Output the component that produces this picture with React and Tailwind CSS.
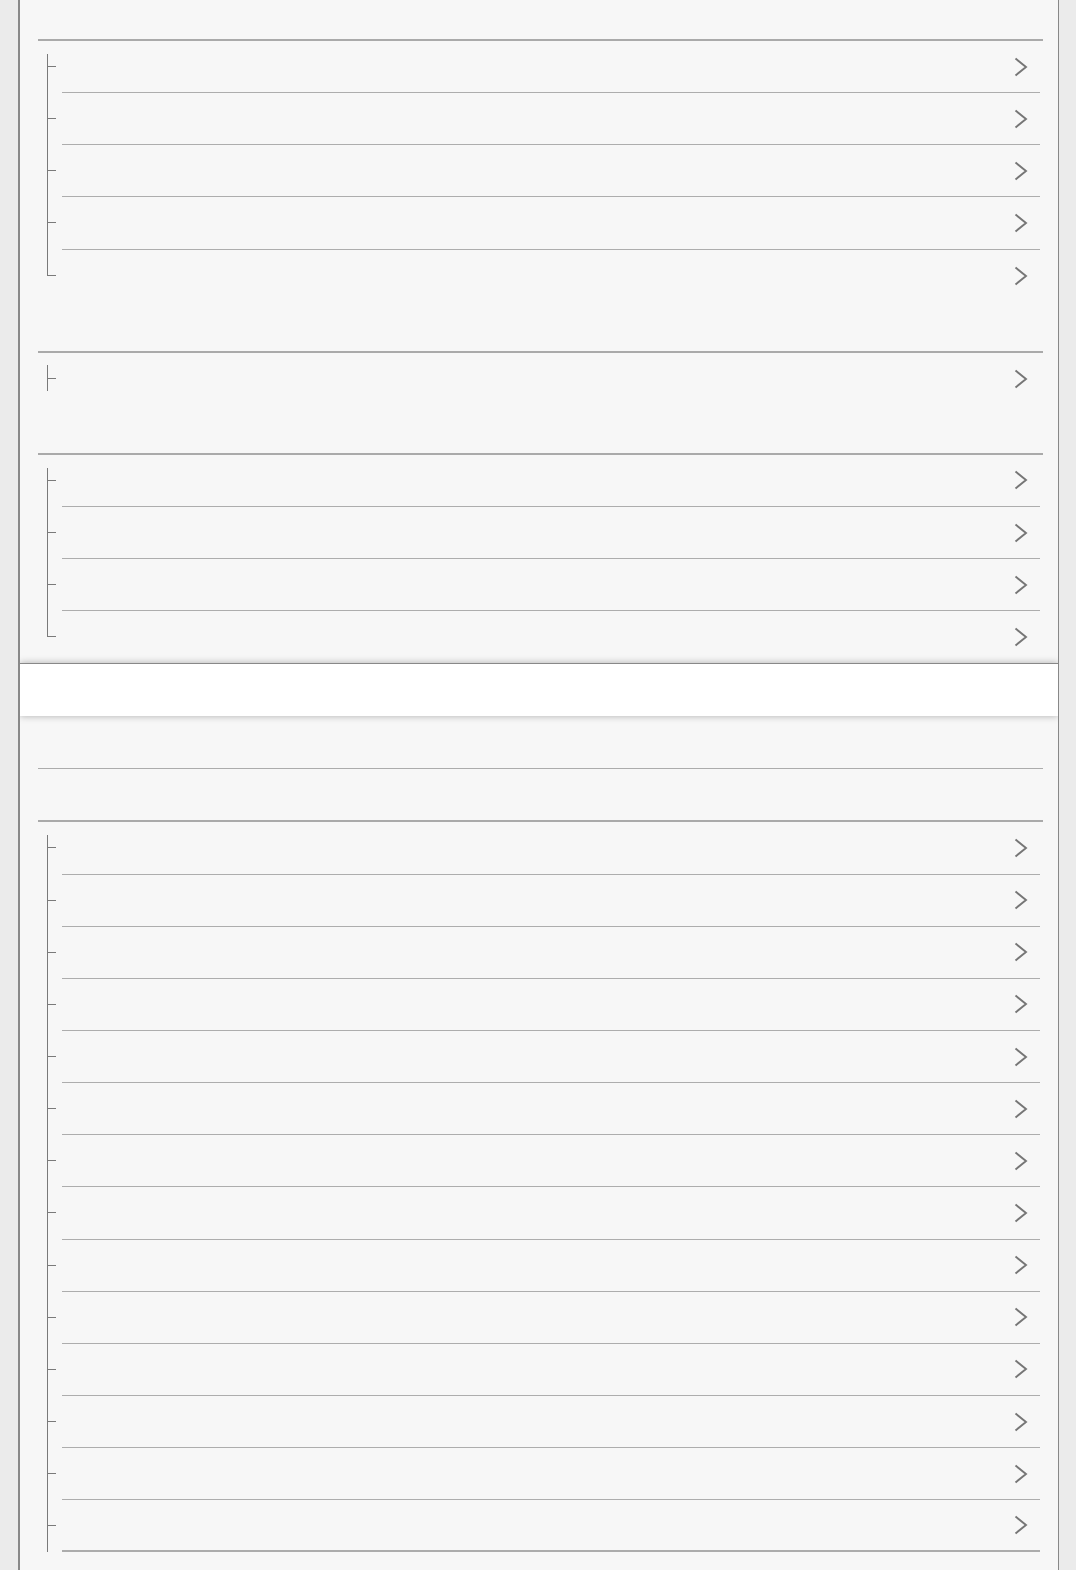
// Settings list – grouped rows with tree guides and chevrons
const Chevron = () => (
    <svg width="14" height="20" viewBox="0 0 14 20" fill="none" className="shrink-0">
        <polyline points="1.5,1.5 12,10 1.5,18.5" stroke="#767676" strokeWidth="1.9" strokeLinejoin="miter" />
    </svg>
);

// Tree guide for a row: kind = first | mid | last | single
function TreeGuide({ kind }) {
    return (
        <div className="ml-[9px] w-[15px] flex flex-col shrink-0">
            {kind === "first" && (
                <>
                    <div className="h-[13px]" />
                    <div className="h-[12px] border-l border-[#7a7a7a]" />
                </>
            )}
            {(kind === "mid" || kind === "last") && <div className="h-[25px] border-l border-[#7a7a7a]" />}
            {kind === "single" && (
                <>
                    <div className="h-[12px]" />
                    <div className="h-[13px] border-l border-[#7a7a7a]" />
                </>
            )}
            <div className="h-px w-[9px] bg-[#7a7a7a]" />
            {(kind === "first" || kind === "mid") && <div className="flex-1 border-l border-[#7a7a7a]" />}
            {kind === "single" && <div className="h-[12px] border-l border-[#7a7a7a]" />}
        </div>
    );
}

function Row({ kind, divider = true, heavy = false }) {
    return (
        <div className="h-[52.15px] flex">
            <TreeGuide kind={kind} />
            <div
                className={`flex-1 mr-[3px] flex items-center justify-end pr-[12px] ${
                    divider ? (heavy ? "border-b-2 border-[#acacac]" : "border-b border-[#adadad]") : ""
                }`}
            >
                <Chevron />
            </div>
        </div>
    );
}

function Section({ count, single = false, pad = "", lastDivider = false }) {
    const rows = Array.from({ length: count }, (_, i) => {
        if (single) return "single";
        if (i === 0) return "first";
        if (i === count - 1 && !lastDivider) return "last";
        return "mid";
    });
    return (
        <section className={`border-t-2 border-[#aaaaaa] ${pad}`}>
            {rows.map((kind, i) => (
                <Row
                    key={i}
                    kind={kind}
                    divider={i < count - 1 || lastDivider}
                    heavy={lastDivider && i === count - 1}
                />
            ))}
        </section>
    );
}

export default function App() {
    return (
        <div className="h-[1570px] bg-[#ebebeb] pl-[18px] pr-[17px] overflow-hidden font-['Liberation_Sans',sans-serif]">
            <div className="h-full bg-[#f7f7f7] border-l-2 border-r border-[#888888] overflow-hidden">
                <div className="pl-[18px] pr-[15px]">
                    <div className="h-[39px]" />
                    <Section count={5} pad="pb-[49px]" />
                    <Section count={1} single pad="pb-[48px]" />
                    <Section count={4} />
                </div>

                <div className="h-[53px] bg-white border-t border-[#888888] shadow-[0_0_7px_rgba(0,0,0,0.3)] relative" />

                <div className="pl-[18px] pr-[15px]">
                    <div className="h-[53px] border-b border-[#acacac]" />
                    <div className="h-[51px]" />
                    <Section count={14} lastDivider />
                </div>
            </div>
        </div>
    );
}
